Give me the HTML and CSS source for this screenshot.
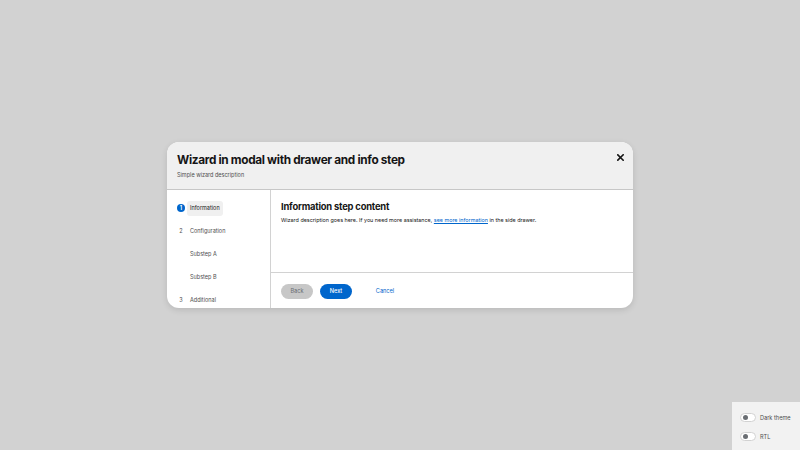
FILE: index.html
```html
<!DOCTYPE html>
<html>
<head>
<meta charset="utf-8">
<link rel="stylesheet" href="styles.css">
</head>
<body>
<div class="backdrop">
  <div class="modal">
    <div class="modal-header">
      <div class="titles">
        <h1 class="title">Wizard in modal with drawer and info step</h1>
        <p class="subtitle">Simple wizard description</p>
      </div>
      <button class="close" aria-label="Close">
        <svg width="7" height="7" viewBox="0 0 7 7"><path d="M0.8 0.8L6.2 6.2M6.2 0.8L0.8 6.2" stroke="#151515" stroke-width="1.6" stroke-linecap="square"/></svg>
      </button>
    </div>
    <div class="modal-body">
      <nav class="nav">
        <div class="nav-item current"><span class="num">1</span><span class="label">Information</span></div>
        <div class="nav-item"><span class="num plain">2</span><span class="label">Configuration</span></div>
        <div class="nav-item sub"><span class="label">Substep A</span></div>
        <div class="nav-item sub"><span class="label">Substep B</span></div>
        <div class="nav-item"><span class="num plain">3</span><span class="label">Additional</span></div>
      </nav>
      <div class="main">
        <div class="content">
          <h2 class="step-title">Information step content</h2>
          <p class="step-desc">Wizard description goes here. If you need more assistance, <a href="#">see more information</a> in the side drawer.</p>
        </div>
        <div class="footer">
          <button class="btn back">Back</button>
          <button class="btn next">Next</button>
          <button class="btn link">Cancel</button>
        </div>
      </div>
    </div>
  </div>
</div>
<div class="settings">
  <div class="toggle-row"><span class="toggle"><span class="knob"></span></span><span class="toggle-label">Dark theme</span></div>
  <div class="toggle-row"><span class="toggle"><span class="knob"></span></span><span class="toggle-label">RTL</span></div>
</div>
</body>
</html>
```
FILE: styles.css
```css
* { box-sizing: border-box; }
html, body { margin: 0; padding: 0; }
body {
  width: 800px;
  height: 450px;
  background: #d2d2d2;
  font-family: "Inter", "Noto Sans", sans-serif;
  color: #151515;
  overflow: hidden;
  position: relative;
}
.backdrop {
  width: 800px;
  height: 450px;
  display: flex;
  align-items: center;
  justify-content: center;
}
.modal {
  width: 466px;
  height: 166px;
  background: #ffffff;
  border-radius: 12px;
  overflow: hidden;
  display: flex;
  flex-direction: column;
  box-shadow: 0 2px 6px rgba(0,0,0,0.12);
}
.modal-header {
  background: #f0f0f0;
  height: 48px;
  flex: none;
  border-bottom: 1px solid #c7c7c7;
  display: flex;
  justify-content: space-between;
  padding: 9px 9px 0 10px;
}
.title {
  margin: 0;
  font-size: 11.8px;
  font-weight: 700;
  letter-spacing: -0.33px;
  line-height: 18px;
}
.subtitle {
  margin: 2px 0 0;
  font-size: 5.5px;
  color: #4d4d4d;
  line-height: 8px;
}
.close {
  border: 0;
  background: transparent;
  padding: 0;
  width: 7px;
  height: 7px;
  margin-top: 3px;
  display: flex;
  align-items: center;
  justify-content: center;
}
.modal-body {
  flex: 1;
  display: flex;
  min-height: 0;
}
.nav {
  width: 104px;
  flex: none;
  border-right: 1px solid #d2d2d2;
  padding: 10px 0 0 10px;
  display: flex;
  flex-direction: column;
  gap: 7px;
  overflow: hidden;
}
.nav-item {
  display: flex;
  align-items: center;
  height: 16px;
  font-size: 5.5px;
  color: #4d4d4d;
  flex: none;
}
.num {
  width: 8px;
  height: 8px;
  border-radius: 50%;
  display: flex;
  align-items: center;
  justify-content: center;
  font-size: 5.5px;
  margin-right: 2px;
  flex: none;
}
.current .num {
  background: #0066cc;
  color: #fff;
  font-weight: 700;
}
.num.plain { color: #4d4d4d; }
.label {
  padding: 0 3px;
  height: 15px;
  display: flex;
  align-items: center;
  border-radius: 3px;
}
.current .label {
  background: #f0f0f0;
  color: #151515;
}
.sub .label { margin-left: 10px; }
.main {
  flex: 1;
  display: flex;
  flex-direction: column;
}
.content {
  flex: 1;
  padding: 10px 10px 0;
  border-bottom: 1px solid #d2d2d2;
}
.step-title {
  margin: 0;
  font-size: 9.4px;
  font-weight: 700;
  letter-spacing: -0.2px;
  line-height: 14px;
}
.step-desc {
  margin: 2px 0 0;
  font-size: 5.4px;
  line-height: 9px;
  color: #151515;
}
.step-desc a { color: #0066cc; text-decoration: underline; }
.footer {
  height: 35px;
  flex: none;
  display: flex;
  align-items: center;
  padding: 1px 10px 0;
  gap: 7px;
}
.btn {
  border: 0;
  height: 15px;
  width: 32px;
  border-radius: 8px;
  font-family: inherit;
  font-size: 5.6px;
  padding: 0;
}
.back { background: #c7c7c7; color: #6a6e73; }
.next { background: #0066cc; color: #fff; font-weight: 500; }
.link { background: transparent; color: #0066cc; margin-left: 10px; }
.settings {
  position: absolute;
  right: 0;
  bottom: 0;
  width: 68px;
  height: 48px;
  background: #f2f2f2;
  padding: 10px 0 0 8px;
  display: flex;
  flex-direction: column;
  gap: 8px;
}
.toggle-row {
  display: flex;
  align-items: center;
  height: 11px;
}
.toggle {
  width: 16px;
  height: 9px;
  border-radius: 5px;
  background: #fff;
  border: 1px solid #d2d2d2;
  display: flex;
  align-items: center;
  padding-left: 2px;
}
.knob {
  width: 5px;
  height: 5px;
  border-radius: 50%;
  background: #6a6e73;
}
.toggle-label {
  font-size: 5.6px;
  color: #4d4d4d;
  margin-left: 4px;
}
```
